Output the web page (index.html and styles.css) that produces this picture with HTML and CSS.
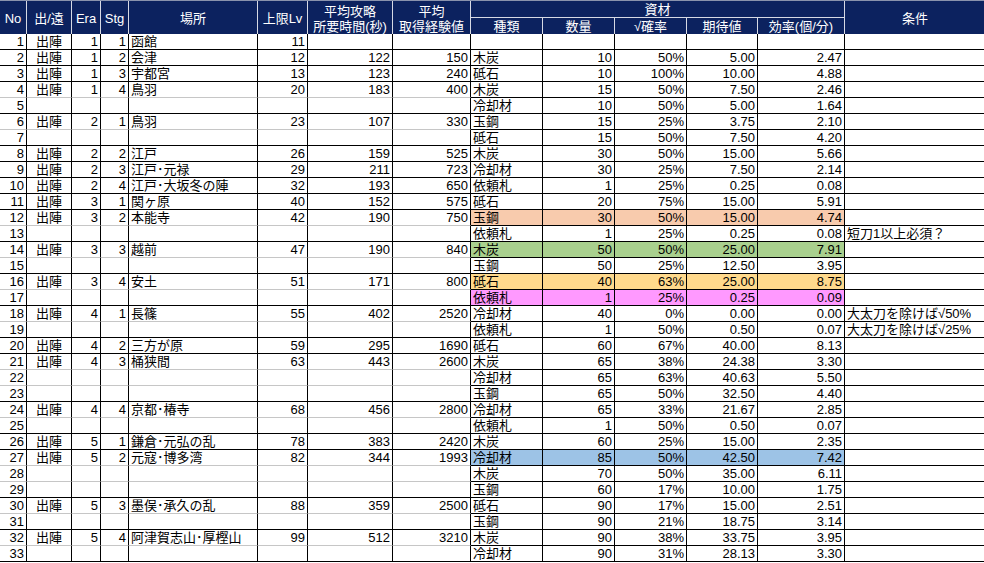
FILE: index.html
```html
<!DOCTYPE html>
<html lang="ja">
<head>
<meta charset="utf-8">
<title>出陣 資材効率</title>
<link rel="stylesheet" href="styles.css">
</head>
<body>
<div class="sheet">
  <div class="hdr">
    <div class="h2">No</div>
    <div class="h2">出/遠</div>
    <div class="h2">Era</div>
    <div class="h2">Stg</div>
    <div class="h2">場所</div>
    <div class="h2">上限Lv</div>
    <div class="h2 two">平均攻略<br>所要時間(秒)</div>
    <div class="h2 two">平均<br>取得経験値</div>
    <div class="mat">資材</div>
    <div class="h2 cond">条件</div>
    <div class="sub">種類</div>
    <div class="sub">数量</div>
    <div class="sub">√確率</div>
    <div class="sub">期待値</div>
    <div class="sub">効率(個/分)</div>
  </div>

  <div class="row"><div>1</div><div>出陣</div><div>1</div><div>1</div><div>函館</div><div>11</div><div></div><div></div><div></div><div></div><div></div><div></div><div></div><div></div></div>
  <div class="row"><div>2</div><div>出陣</div><div>1</div><div>2</div><div>会津</div><div>12</div><div>122</div><div>150</div><div>木炭</div><div>10</div><div>50%</div><div>5.00</div><div>2.47</div><div></div></div>
  <div class="row"><div>3</div><div>出陣</div><div>1</div><div>3</div><div>宇都宮</div><div>13</div><div>123</div><div>240</div><div>砥石</div><div>10</div><div>100%</div><div>10.00</div><div>4.88</div><div></div></div>
  <div class="row inner"><div>4</div><div>出陣</div><div>1</div><div>4</div><div>鳥羽</div><div>20</div><div>183</div><div>400</div><div>木炭</div><div>15</div><div>50%</div><div>7.50</div><div>2.46</div><div></div></div>
  <div class="row"><div>5</div><div></div><div></div><div></div><div></div><div></div><div></div><div></div><div>冷却材</div><div>10</div><div>50%</div><div>5.00</div><div>1.64</div><div></div></div>
  <div class="row inner"><div>6</div><div>出陣</div><div>2</div><div>1</div><div>鳥羽</div><div>23</div><div>107</div><div>330</div><div>玉鋼</div><div>15</div><div>25%</div><div>3.75</div><div>2.10</div><div></div></div>
  <div class="row"><div>7</div><div></div><div></div><div></div><div></div><div></div><div></div><div></div><div>砥石</div><div>15</div><div>50%</div><div>7.50</div><div>4.20</div><div></div></div>
  <div class="row"><div>8</div><div>出陣</div><div>2</div><div>2</div><div>江戸</div><div>26</div><div>159</div><div>525</div><div>木炭</div><div>30</div><div>50%</div><div>15.00</div><div>5.66</div><div></div></div>
  <div class="row"><div>9</div><div>出陣</div><div>2</div><div>3</div><div>江戸･元禄</div><div>29</div><div>211</div><div>723</div><div>冷却材</div><div>30</div><div>25%</div><div>7.50</div><div>2.14</div><div></div></div>
  <div class="row"><div>10</div><div>出陣</div><div>2</div><div>4</div><div>江戸･大坂冬の陣</div><div>32</div><div>193</div><div>650</div><div>依頼札</div><div>1</div><div>25%</div><div>0.25</div><div>0.08</div><div></div></div>
  <div class="row"><div>11</div><div>出陣</div><div>3</div><div>1</div><div>関ヶ原</div><div>40</div><div>152</div><div>575</div><div>砥石</div><div>20</div><div>75%</div><div>15.00</div><div>5.91</div><div></div></div>
  <div class="row inner salmon"><div>12</div><div>出陣</div><div>3</div><div>2</div><div>本能寺</div><div>42</div><div>190</div><div>750</div><div>玉鋼</div><div>30</div><div>50%</div><div>15.00</div><div>4.74</div><div></div></div>
  <div class="row"><div>13</div><div></div><div></div><div></div><div></div><div></div><div></div><div></div><div>依頼札</div><div>1</div><div>25%</div><div>0.25</div><div>0.08</div><div>短刀1以上必須？</div></div>
  <div class="row inner green"><div>14</div><div>出陣</div><div>3</div><div>3</div><div>越前</div><div>47</div><div>190</div><div>840</div><div>木炭</div><div>50</div><div>50%</div><div>25.00</div><div>7.91</div><div></div></div>
  <div class="row"><div>15</div><div></div><div></div><div></div><div></div><div></div><div></div><div></div><div>玉鋼</div><div>50</div><div>25%</div><div>12.50</div><div>3.95</div><div></div></div>
  <div class="row inner yellow"><div>16</div><div>出陣</div><div>3</div><div>4</div><div>安土</div><div>51</div><div>171</div><div>800</div><div>砥石</div><div>40</div><div>63%</div><div>25.00</div><div>8.75</div><div></div></div>
  <div class="row pink"><div>17</div><div></div><div></div><div></div><div></div><div></div><div></div><div></div><div>依頼札</div><div>1</div><div>25%</div><div>0.25</div><div>0.09</div><div></div></div>
  <div class="row inner"><div>18</div><div>出陣</div><div>4</div><div>1</div><div>長篠</div><div>55</div><div>402</div><div>2520</div><div>冷却材</div><div>40</div><div>0%</div><div>0.00</div><div>0.00</div><div>大太刀を除けば√50%</div></div>
  <div class="row"><div>19</div><div></div><div></div><div></div><div></div><div></div><div></div><div></div><div>依頼札</div><div>1</div><div>50%</div><div>0.50</div><div>0.07</div><div>大太刀を除けば√25%</div></div>
  <div class="row"><div>20</div><div>出陣</div><div>4</div><div>2</div><div>三方が原</div><div>59</div><div>295</div><div>1690</div><div>砥石</div><div>60</div><div>67%</div><div>40.00</div><div>8.13</div><div></div></div>
  <div class="row inner"><div>21</div><div>出陣</div><div>4</div><div>3</div><div>桶狭間</div><div>63</div><div>443</div><div>2600</div><div>木炭</div><div>65</div><div>38%</div><div>24.38</div><div>3.30</div><div></div></div>
  <div class="row inner"><div>22</div><div></div><div></div><div></div><div></div><div></div><div></div><div></div><div>冷却材</div><div>65</div><div>63%</div><div>40.63</div><div>5.50</div><div></div></div>
  <div class="row"><div>23</div><div></div><div></div><div></div><div></div><div></div><div></div><div></div><div>玉鋼</div><div>65</div><div>50%</div><div>32.50</div><div>4.40</div><div></div></div>
  <div class="row inner"><div>24</div><div>出陣</div><div>4</div><div>4</div><div>京都･椿寺</div><div>68</div><div>456</div><div>2800</div><div>冷却材</div><div>65</div><div>33%</div><div>21.67</div><div>2.85</div><div></div></div>
  <div class="row"><div>25</div><div></div><div></div><div></div><div></div><div></div><div></div><div></div><div>依頼札</div><div>1</div><div>50%</div><div>0.50</div><div>0.07</div><div></div></div>
  <div class="row"><div>26</div><div>出陣</div><div>5</div><div>1</div><div>鎌倉･元弘の乱</div><div>78</div><div>383</div><div>2420</div><div>木炭</div><div>60</div><div>25%</div><div>15.00</div><div>2.35</div><div></div></div>
  <div class="row inner blue"><div>27</div><div>出陣</div><div>5</div><div>2</div><div>元寇･博多湾</div><div>82</div><div>344</div><div>1993</div><div>冷却材</div><div>85</div><div>50%</div><div>42.50</div><div>7.42</div><div></div></div>
  <div class="row inner"><div>28</div><div></div><div></div><div></div><div></div><div></div><div></div><div></div><div>木炭</div><div>70</div><div>50%</div><div>35.00</div><div>6.11</div><div></div></div>
  <div class="row"><div>29</div><div></div><div></div><div></div><div></div><div></div><div></div><div></div><div>玉鋼</div><div>60</div><div>17%</div><div>10.00</div><div>1.75</div><div></div></div>
  <div class="row inner"><div>30</div><div>出陣</div><div>5</div><div>3</div><div>墨俣･承久の乱</div><div>88</div><div>359</div><div>2500</div><div>砥石</div><div>90</div><div>17%</div><div>15.00</div><div>2.51</div><div></div></div>
  <div class="row"><div>31</div><div></div><div></div><div></div><div></div><div></div><div></div><div></div><div>玉鋼</div><div>90</div><div>21%</div><div>18.75</div><div>3.14</div><div></div></div>
  <div class="row inner"><div>32</div><div>出陣</div><div>5</div><div>4</div><div>阿津賀志山･厚樫山</div><div>99</div><div>512</div><div>3210</div><div>木炭</div><div>90</div><div>38%</div><div>33.75</div><div>3.95</div><div></div></div>
  <div class="row"><div>33</div><div></div><div></div><div></div><div></div><div></div><div></div><div></div><div>冷却材</div><div>90</div><div>31%</div><div>28.13</div><div>3.30</div><div></div></div>
</div>
</body>
</html>
```

FILE: styles.css
```css
html, body {
  margin: 0;
  padding: 0;
  background: #ffffff;
}

body {
  font-family: "Liberation Sans", "Noto Sans CJK JP", sans-serif;
  font-size: 13px;
  color: #000000;
}

.sheet {
  width: 984px;
}

.hdr,
.row {
  display: grid;
  grid-template-columns: 27px 45px 29px 28px 129px 50px 85px 78px 72px 72px 72px 71px 87px 140px;
}

.hdr {
  grid-template-rows: 17px 17px;
  background: #0c225f;
  color: #ffffff;
  border-top: 1px solid #8a93ad;
  box-sizing: border-box;
  height: 34px;
}

.hdr > div {
  box-sizing: border-box;
  border-right: 1px solid #d6d9e4;
  display: flex;
  align-items: center;
  justify-content: center;
  text-align: center;
  line-height: 15px;
  white-space: nowrap;
}

.hdr .h2 {
  grid-row: 1 / span 2;
}

.hdr .two {
  line-height: 15px;
  padding-top: 1px;
}

.hdr .mat {
  grid-column: 9 / span 5;
  grid-row: 1;
  border-bottom: 1px solid #d6d9e4;
}

.hdr .cond {
  grid-column: 14;
  border-right: none;
}

.hdr .sub {
  grid-row: 2;
}

.row {
  height: 16px;
}

.row > div {
  box-sizing: border-box;
  border-right: 1px solid #000000;
  border-bottom: 1px solid #000000;
  line-height: 15px;
  padding: 0 2px;
  white-space: nowrap;
}

.row > div:last-child {
  border-right: none;
}

.row.inner > div:nth-child(-n+8) {
  border-bottom-color: #c6c6c6;
}

.row > div:nth-child(1),
.row > div:nth-child(3),
.row > div:nth-child(4),
.row > div:nth-child(6),
.row > div:nth-child(7),
.row > div:nth-child(8),
.row > div:nth-child(10),
.row > div:nth-child(11),
.row > div:nth-child(12),
.row > div:nth-child(13) {
  text-align: right;
}

.row > div:nth-child(2) {
  text-align: center;
}

.row.salmon > div:nth-child(n+9):nth-child(-n+13) {
  background: #f8cbad;
}

.row.green > div:nth-child(n+9):nth-child(-n+13) {
  background: #a9d08e;
}

.row.yellow > div:nth-child(n+9):nth-child(-n+13) {
  background: #ffd98c;
}

.row.pink > div:nth-child(n+9):nth-child(-n+13) {
  background: #ff99ff;
}

.row.blue > div:nth-child(n+9):nth-child(-n+13) {
  background: #9dc3e6;
}
```
